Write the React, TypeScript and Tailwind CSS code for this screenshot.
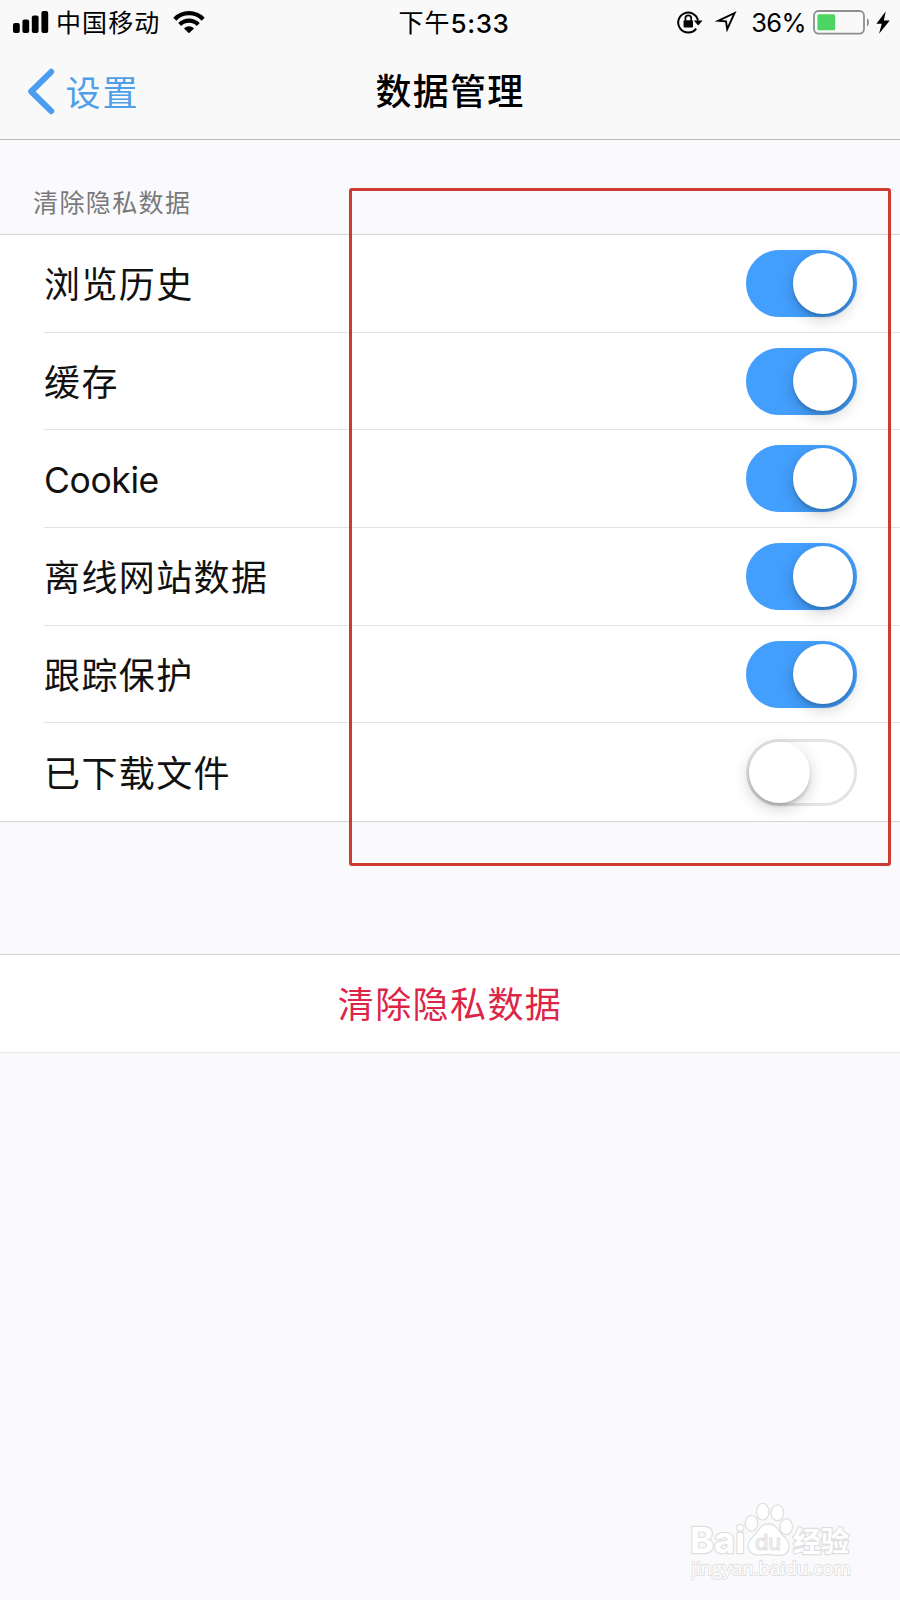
import { useState } from "react"
import clsx from "clsx"

const initialItems = [
  { id: "history", label: "浏览历史", enabled: true },
  { id: "cache", label: "缓存", enabled: true },
  { id: "cookie", label: "Cookie", latin: true, enabled: true },
  { id: "offline", label: "离线网站数据", enabled: true },
  { id: "tracking", label: "跟踪保护", enabled: true },
  { id: "downloads", label: "已下载文件", enabled: false },
]

function SignalIcon() {
  return (
    <svg width="36" height="22" viewBox="0 0 36 22" fill="#000">
      <rect x="0" y="12" width="6.8" height="10" rx="2" />
      <rect x="9.4" y="8.6" width="6.8" height="13.4" rx="2" />
      <rect x="18.8" y="4.4" width="6.8" height="17.6" rx="2" />
      <rect x="28.4" y="0" width="6.8" height="22" rx="2" />
    </svg>
  )
}

function WifiIcon() {
  return (
    <svg width="32" height="22" viewBox="0 0 32 22" fill="none" stroke="#000" strokeWidth="4.2">
      <path d="M1.8 8.2C9.6 0.2 22.4 0.2 30.2 8.2" />
      <path d="M6.7 13.6C12 8.4 20 8.4 25.3 13.6" />
      <path d="M11 17.4C14 14.5 18 14.5 21 17.4L16 22.3Z" fill="#000" stroke="none" />
    </svg>
  )
}

function RotationLockIcon() {
  return (
    <svg width="26" height="24" viewBox="0 0 26 24" fill="none">
      <path d="M19.2 18.6A10 10 0 1 1 21 10.6" stroke="#000" strokeWidth="2" />
      <path d="M16.8 10.4H25.6L21.2 15.6Z" fill="#000" />
      <rect x="6.6" y="10.2" width="9.4" height="7.4" rx="1" fill="#000" />
      <path d="M8.4 10.6V8.3a2.9 2.9 0 0 1 5.8 0v2.3" stroke="#000" strokeWidth="1.7" />
    </svg>
  )
}

function LocationIcon() {
  return (
    <svg width="22" height="22" viewBox="0 0 22 22" fill="none" stroke="#000" strokeWidth="1.9">
      <path d="M19.6 2L3.2 9.8L11 10.4L12.2 18.2Z" strokeLinejoin="miter" />
    </svg>
  )
}

function BatteryIcon() {
  return (
    <svg width="57" height="25" viewBox="0 0 57 25" fill="none">
      <rect x="1" y="1" width="50" height="22.6" rx="4.5" stroke="#8e8e90" strokeWidth="1.8" />
      <rect x="4.4" y="4.2" width="17.8" height="16" rx="1.5" fill="#4cd562" />
      <path d="M54 8.2C56.6 9.4 56.6 15.2 54 16.4Z" fill="#8e8e90" />
    </svg>
  )
}

function BoltIcon() {
  return (
    <svg width="14" height="23" viewBox="0 0 14 23" fill="#000">
      <path d="M9.8 0.2L0.4 12.8H5.8L3 22.8L13.8 9.4H7.8Z" />
    </svg>
  )
}

function StatusBar() {
  return (
    <div className="grid h-11 grid-cols-3 items-center text-[25px] text-black">
      <div className="flex items-center pl-[13px]">
        <SignalIcon />
        <span className="ml-[7px] pt-[3px] tracking-[1.1px]">中国移动</span>
        <span className="ml-[13px]">
          <WifiIcon />
        </span>
      </div>
      <div className="flex items-center justify-center pl-2 font-medium">
        <span className="pt-[3px] font-normal tracking-[1px]">下午</span>
        <span className="pt-[2px] font-['Inter'] text-[26px] tracking-[0.6px]">5:33</span>
      </div>
      <div className="flex items-center justify-end pr-[10px]">
        <RotationLockIcon />
        <span className="ml-[12px]">
          <LocationIcon />
        </span>
        <span className="ml-[14px] pt-[3px] font-['Inter'] text-[25.5px] tracking-[-0.6px]">36%</span>
        <span className="ml-[7px]">
          <BatteryIcon />
        </span>
        <span className="ml-[6px]">
          <BoltIcon />
        </span>
      </div>
    </div>
  )
}

function NavBar() {
  return (
    <div className="grid h-[95px] grid-cols-3 items-center">
      <button className="flex items-center pl-[27px] text-[35px] text-[#4f9fe8]">
        <svg width="28" height="47" viewBox="0 0 28 47" fill="none">
          <path d="M24.2 3.8L4.2 23.5L24.2 43.2" stroke="#4a9df0" strokeWidth="6" strokeLinecap="round" strokeLinejoin="round" />
        </svg>
        <span className="ml-[10.5px] pt-[3px] tracking-[2px]">设置</span>
      </button>
      <h1 className="pt-px text-center text-[36px] font-medium tracking-[1.3px] text-black">数据管理</h1>
    </div>
  )
}

function Toggle({ checked, onChange }: { checked: boolean; onChange: () => void }) {
  return (
    <button
      role="switch"
      aria-checked={checked}
      onClick={onChange}
      className={clsx(
        "flex h-[67px] w-[111px] items-center rounded-full border-[3px]",
        checked ? "justify-end border-[#439ffd] bg-[#439ffd] pr-[0.8px]" : "justify-start border-[#e4e4e4] bg-white",
      )}
    >
      <span className="size-[60.5px] rounded-full bg-white shadow-[0_5px_16px_rgba(0,0,0,0.2),0_3px_3px_rgba(0,0,0,0.14)]" />
    </button>
  )
}

function Watermark() {
  return (
    <div className="absolute top-[1500px] left-[690px] h-[84px] w-[170px] leading-none">
      <svg width="170" height="84" viewBox="0 0 170 84" fill="#fff" stroke="#dfdfe1" strokeWidth="1.3">
        <g style={{ paintOrder: "stroke" }} fontFamily="Inter, sans-serif" strokeWidth="2.4">
          <text x="0" y="53" fontSize="36" fontWeight="700" textLength="55" lengthAdjust="spacingAndGlyphs">
            Bai
          </text>
          <text x="103" y="52" fontSize="28" fontWeight="700" fontFamily="Noto Sans CJK SC, sans-serif" textLength="56">
            经验
          </text>
          <text x="1" y="75" fontSize="19" fontFamily="Open Sans, sans-serif" strokeWidth="1.8" textLength="160" lengthAdjust="spacingAndGlyphs">
            jingyan.baidu.com
          </text>
        </g>
        <ellipse cx="61.5" cy="23.3" rx="6.3" ry="8" />
        <ellipse cx="72.7" cy="11.8" rx="6.3" ry="8.4" />
        <ellipse cx="87.3" cy="12.8" rx="6.3" ry="8" />
        <ellipse cx="96.2" cy="26.7" rx="6.3" ry="8" />
        <path d="M78.5 24C70 24 69 31 63.5 36C57 42 56.5 49 61.5 53C66.5 57 72 54.5 78.5 54.5C85 54.5 91.5 57.5 96 53.5C101 48.5 99.5 42 94 36.5C88 31 87 24 78.5 24Z" />
        <text x="65" y="49.5" fontSize="22" fontFamily="Inter, sans-serif" fontWeight="400" textLength="26" strokeWidth="1.2">
          du
        </text>
      </svg>
    </div>
  )
}

export default function App() {
  const [items, setItems] = useState(initialItems)

  const toggleItem = (id: string) => {
    setItems(items.map((item) => (item.id === id ? { ...item, enabled: !item.enabled } : item)))
  }

  return (
    <div className="relative h-[1600px] w-[900px] overflow-hidden bg-[#fafafc] font-['Inter','Noto_Sans_CJK_SC',sans-serif]">
      <header className="h-[140px] border-b border-[#b9b9bb] bg-[#faf9fa]">
        <StatusBar />
        <NavBar />
      </header>

      <h2 className="flex h-[94px] items-center pt-[33px] pl-[33px] text-[25px] tracking-[1.4px] text-[#79797c]">
        清除隐私数据
      </h2>

      <ul className="border-y border-[#d6d6d8] bg-white pl-11">
        {items.map((item) => (
          <li
            key={item.id}
            className="flex h-[97.7px] items-center justify-between border-b border-[#e2e2e4] pr-[43px] last:border-b-0"
          >
            <span
              className={clsx(
                "text-[#111]",
                item.latin ? "pt-[4px] text-[35.5px] tracking-[-0.4px]" : "pt-[3px] text-[36px] tracking-[1.4px]",
              )}
            >
              {item.label}
            </span>
            <Toggle checked={item.enabled} onChange={() => toggleItem(item.id)} />
          </li>
        ))}
      </ul>

      <button className="mt-[132px] flex h-[99px] w-full items-center justify-center border-y border-t-[#d2d2d4] border-b-[#e8e8ea] bg-white pt-[3px] text-[36px] tracking-[1.4px] text-[#dc2648]">
        清除隐私数据
      </button>

      {/* highlighted area around the switches */}
      <div className="pointer-events-none absolute top-[188px] left-[349px] h-[678px] w-[542px] rounded-[3px] border-[3px] border-[#cc3a33]" />

      <Watermark />
    </div>
  )
}
